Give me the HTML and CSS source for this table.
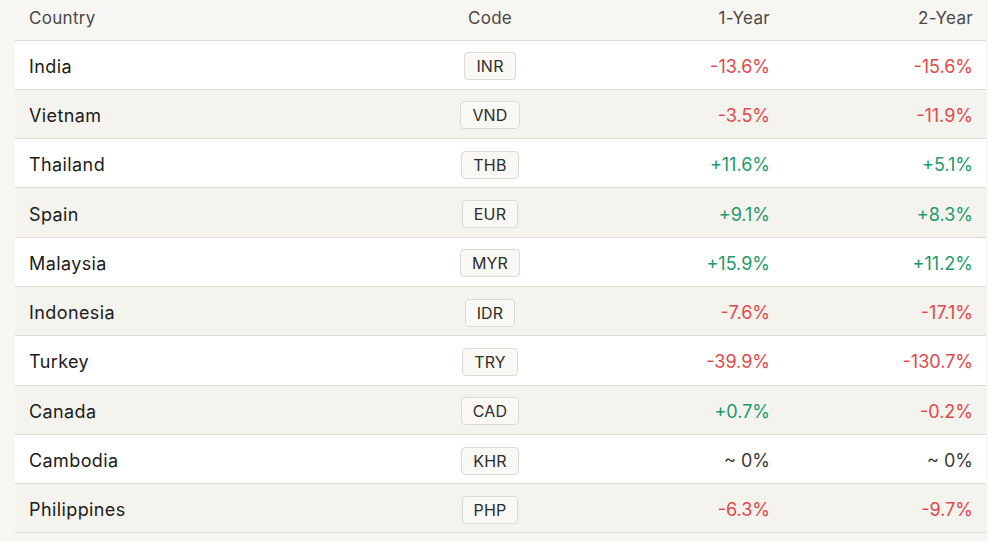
FILE: index.html
```html
<!DOCTYPE html>
<html lang="en">
<head>
<meta charset="utf-8">
<title>Currency changes</title>
<link rel="stylesheet" href="styles.css">
</head>
<body>
<div class="wrap">
<table class="fx">
<colgroup>
<col class="c-country"><col class="c-code"><col class="c-y1"><col class="c-y2">
</colgroup>
<thead>
<tr><th class="l">Country</th><th class="c">Code</th><th class="r">1-Year</th><th class="r">2-Year</th></tr>
</thead>
<tbody>
<tr><td class="l">India</td><td class="c"><span class="code">INR</span></td><td class="r neg">-13.6%</td><td class="r neg">-15.6%</td></tr>
<tr><td class="l">Vietnam</td><td class="c"><span class="code">VND</span></td><td class="r neg">-3.5%</td><td class="r neg">-11.9%</td></tr>
<tr><td class="l">Thailand</td><td class="c"><span class="code">THB</span></td><td class="r pos">+11.6%</td><td class="r pos">+5.1%</td></tr>
<tr><td class="l">Spain</td><td class="c"><span class="code">EUR</span></td><td class="r pos">+9.1%</td><td class="r pos">+8.3%</td></tr>
<tr><td class="l">Malaysia</td><td class="c"><span class="code">MYR</span></td><td class="r pos">+15.9%</td><td class="r pos">+11.2%</td></tr>
<tr><td class="l">Indonesia</td><td class="c"><span class="code">IDR</span></td><td class="r neg">-7.6%</td><td class="r neg">-17.1%</td></tr>
<tr><td class="l">Turkey</td><td class="c"><span class="code">TRY</span></td><td class="r neg">-39.9%</td><td class="r neg">-130.7%</td></tr>
<tr><td class="l">Canada</td><td class="c"><span class="code">CAD</span></td><td class="r pos">+0.7%</td><td class="r neg">-0.2%</td></tr>
<tr><td class="l">Cambodia</td><td class="c"><span class="code">KHR</span></td><td class="r flat">~ 0%</td><td class="r flat">~ 0%</td></tr>
<tr><td class="l">Philippines</td><td class="c"><span class="code">PHP</span></td><td class="r neg">-6.3%</td><td class="r neg">-9.7%</td></tr>
</tbody>
</table>
</div>
</body>
</html>
```
FILE: styles.css
```css
html, body {
  margin: 0;
  padding: 0;
  background: #f7f6f2;
}
body {
  font-family: Inter, "Liberation Sans", sans-serif;
  color: #1c1b19;
}
.wrap {
  padding-left: 15px;
}
.fx {
  width: 971px;
  border-collapse: collapse;
  table-layout: fixed;
}
.c-country { width: 384px; }
.c-code { width: 182px; }
.c-y1 { width: 202px; }
.c-y2 { width: 203px; }

.fx th {
  height: 40px;
  box-sizing: border-box;
  padding: 0 14px 3px;
  font-weight: 400;
  font-size: 17px;
  letter-spacing: 0.3px;
  color: #4a4843;
  border-bottom: 1px solid #dddbd5;
  vertical-align: middle;
}
.fx td {
  height: 49.3px;
  box-sizing: border-box;
  padding: 3px 14px 0;
  font-size: 18px;
  border-bottom: 1px solid #dddbd5;
  vertical-align: middle;
}
.fx th.r, .fx td.r { padding-right: 13px; }
.fx td.l { letter-spacing: 0.4px; }
.fx tbody tr:nth-child(odd) td { background: #ffffff; }
.fx tbody tr:nth-child(even) td { background: #f4f3ed; }

.l { text-align: left; }
.c { text-align: center; }
.r { text-align: right; }

.code {
  display: inline-block;
  font-size: 16px;
  line-height: 26px;
  padding: 0 11px;
  letter-spacing: 0.2px;
  border: 1px solid #dcdad3;
  border-radius: 4px;
  background: #f9f8f4;
  color: #2e2d2a;
}
.neg { color: #e2484b; }
.pos { color: #1e9a6d; }
.flat { color: #3a3935; }
```
